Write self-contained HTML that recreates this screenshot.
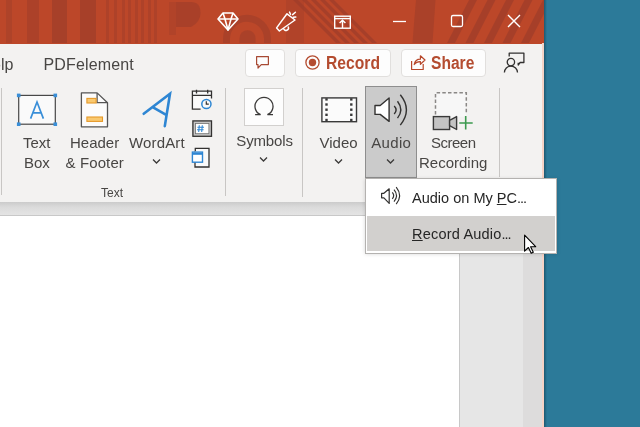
<!DOCTYPE html>
<html><head><meta charset="utf-8">
<style>
html,body{margin:0;padding:0;}
body{width:640px;height:427px;overflow:hidden;position:relative;background:#2C7A99;font-family:"Liberation Sans",sans-serif;}
.a{position:absolute;}
.win{left:0;top:0;width:544px;height:427px;background:#F3F2F1;overflow:hidden;}
.title{left:0;top:0;width:544px;height:43.5px;background:#BC4729;}
.lbl{position:absolute;font-size:15px;color:#484644;white-space:nowrap;line-height:20px;}
.sep{position:absolute;width:1px;background:#C8C6C4;}
.btn{position:absolute;top:48.5px;height:28.5px;background:#FDFDFD;border:1px solid #E1DFDD;border-radius:4px;box-sizing:border-box;}
.chev{position:absolute;}
.bt{font-size:17.5px;font-weight:bold;color:#B44C30;transform-origin:0 0;}
</style></head><body><div style="position:absolute;left:0;top:0;width:640px;height:427px;will-change:transform;">
<div class="a win">
  <!-- title bar -->
  <div class="a title">
    <svg class="a" style="left:0;top:0" width="544" height="43">
      <g fill="#9E3D2A">
        <rect x="6" y="0" width="6" height="43" opacity="0.45"/>
        <rect x="27" y="0" width="12" height="43" opacity="0.55"/>
        <rect x="52" y="0" width="15" height="43" opacity="0.7"/>
        <rect x="80" y="0" width="16" height="43" opacity="0.7"/>
        <g opacity="0.45">
        <rect x="106" y="0" width="3" height="43"/>
        <rect x="114" y="0" width="3" height="43"/>
        <rect x="122" y="0" width="3" height="43"/>
        <rect x="128" y="0" width="3" height="43"/>
        <rect x="135" y="0" width="3" height="43"/>
        <rect x="141" y="0" width="3" height="43"/>
        <rect x="148" y="0" width="3" height="43"/>
        <rect x="154" y="0" width="3" height="43"/>
        </g>
        <rect x="169" y="2" width="7" height="33" opacity="0.35"/>
        <path d="M176 2 H191 Q200.5 2 200.5 13 Q200.5 22 191 27 H176 Z" opacity="0.65"/>
        <path d="M226.5 43 V38.8 A20.5 20.5 0 0 1 267.5 38.8 V43" fill="none" stroke="#9E3D2A" stroke-width="7" opacity="0.6"/>
        <path d="M239.5 43 V38.2 A8 8 0 0 1 255.5 38.2 V43 Z" opacity="0.6"/>
        <rect x="286" y="0" width="18" height="43" opacity="0.35"/>
        <g opacity="0.7">
        <path d="M293 0 H298 L342 44 H337 Z"/>
        <path d="M302 0 H307 L351 44 H346 Z"/>
        <path d="M311 0 H316 L360 44 H355 Z"/>
        <path d="M320 0 H325 L369 44 H364 Z"/>
        <path d="M329 0 H334 L378 44 H373 Z"/>
        </g>
        <path d="M416 0 H435.5 Q434 22 432.5 43 H412.5 Q414 22 416 0 Z" opacity="0.6"/>
        <g opacity="0.7">
        <path d="M447 43 H455 L477 0 H469 Z"/>
        <path d="M465.5 43 H473.5 L495.5 0 H487.5 Z"/>
        <path d="M484 43 H492 L514 0 H506 Z"/>
        <path d="M502.5 43 H510.5 L532.5 0 H524.5 Z"/>
        <path d="M521 43 H529 L551 0 H543 Z"/>
        </g>
      </g>
      <!-- diamond -->
      <g fill="none" stroke="#fff" stroke-width="1.6" stroke-linejoin="round">
        <path d="M223 13 H233 L238 19 L228 30 L218 19 Z"/>
        <path d="M218 19 H238 M223 13 L225 19 L228 30 L231 19 L233 13"/>
      </g>
      <!-- megaphone -->
      <g fill="none" stroke="#fff" stroke-width="1.5" stroke-linejoin="round" stroke-linecap="round">
        <path d="M276.6 27.9 L287 13.8 L295 20 L279.4 31 Z"/>
        <path d="M283.6 28.8 A2.5 2.5 0 0 0 288.3 27"/>
        <path d="M289.5 12.1 L290.5 14.2 M292.6 14.6 L295.4 12.2 M293.3 17.3 L295.8 17"/>
      </g>
      <!-- ribbon display -->
      <g fill="none" stroke="#fff" stroke-width="1.4">
        <rect x="334.7" y="16.2" width="15.6" height="12"/>
        <path d="M334.7 18.6 H350.3"/>
        <path d="M342.5 28 V20.2 M339.6 23.1 L342.5 20.2 L345.4 23.1"/>
      </g>
      <!-- minimize -->
      <path d="M393 21.5 H406" stroke="#fff" stroke-width="1.3"/>
      <!-- maximize -->
      <rect x="451.5" y="15.5" width="11" height="11" rx="1.5" fill="none" stroke="#fff" stroke-width="1.3"/>
      <!-- close -->
      <path d="M508 15 L520 27 M520 15 L508 27" stroke="#fff" stroke-width="1.4"/>
    </svg>
  </div>

  <!-- tabs row -->
  <div class="lbl" style="left:-19.5px;top:55px;font-size:16px;">Help</div>
  <div class="lbl" style="left:43.5px;top:55px;font-size:16px;letter-spacing:0.15px;">PDFelement</div>

  <div class="btn" style="left:245px;width:40px;"></div>
  <svg class="a" style="left:245px;top:48px" width="40" height="29">
    <path d="M11.6 8.6 H23.4 V16.6 H16.3 L13 20 V16.6 H11.6 Z" fill="none" stroke="#A84A34" stroke-width="1.2" stroke-linejoin="round"/>
  </svg>

  <div class="btn" style="left:295px;width:96px;"></div>
  <svg class="a" style="left:295px;top:48px" width="30" height="29">
    <circle cx="17.5" cy="14.5" r="6.6" fill="none" stroke="#B44C30" stroke-width="1.3"/>
    <circle cx="17.5" cy="14.5" r="3.7" fill="#B44C30"/>
  </svg>
  <div class="lbl bt" style="left:325.5px;top:52.6px;transform:scaleX(0.895);">Record</div>

  <div class="btn" style="left:401px;width:85px;"></div>
  <svg class="a" style="left:401px;top:48px" width="30" height="29">
    <g fill="none" stroke="#B7472A" stroke-width="1.2" stroke-linejoin="round">
      <path d="M10.6 13 V21.5 H22.2 V16"/>
      <path d="M13.2 16.5 Q14.2 11.2 19.4 11.2 V7.8 L24 12 L19.4 16.3 V13.6 Q15.5 13.4 13.2 16.5 Z"/>
    </g>
  </svg>
  <div class="lbl bt" style="left:431px;top:52.6px;transform:scaleX(0.89);">Share</div>

  <svg class="a" style="left:498px;top:46px" width="32" height="32">
    <g fill="none" stroke="#323130" stroke-width="1.3" stroke-linejoin="round">
      <path d="M11.2 10.5 V7.1 H25.9 V16.5 H22.1 L20.2 19.1 V16.8"/>
      <circle cx="12.9" cy="16.1" r="3.7"/>
      <path d="M6.4 26.6 A6.55 6.55 0 0 1 19.5 26.6"/>
    </g>
  </svg>

  <!-- ribbon body -->
  <div class="sep" style="left:1px;top:88px;height:107px;"></div>

  <!-- Text Box -->
  <svg class="a" style="left:14px;top:92px" width="48" height="36">
    <rect x="4.7" y="3.4" width="36.6" height="28.8" fill="#FAFAFA" stroke="#484848" stroke-width="1.2"/>
    <g fill="#3A8FD8">
      <rect x="2.9" y="1.6" width="3.6" height="3.6"/><rect x="39.5" y="1.6" width="3.6" height="3.6"/>
      <rect x="2.9" y="30.4" width="3.6" height="3.6"/><rect x="39.5" y="30.4" width="3.6" height="3.6"/>
    </g>
    <path d="M16.6 26.6 L23 10 L29.4 26.6 M18.8 20.9 H27.2" fill="none" stroke="#3A8FD8" stroke-width="1.7"/>
  </svg>
  <div class="lbl" style="left:23px;top:132.9px;">Text</div>
  <div class="lbl" style="left:24px;top:152.9px;">Box</div>

  <!-- Header & Footer -->
  <svg class="a" style="left:78px;top:90px" width="34" height="40">
    <path d="M3.4 2.9 H19.1 L29.5 12.7 V36.8 H3.4 Z" fill="#FCFCFC" stroke="#555555" stroke-width="1.3" stroke-linejoin="round"/>
    <path d="M19.1 2.9 V12.7 H29.5" fill="none" stroke="#555555" stroke-width="1.3"/>
    <rect x="8.9" y="8.4" width="9.2" height="4.6" fill="#F9C970" stroke="#E69A2A" stroke-width="1.1"/>
    <rect x="8.9" y="27" width="15.6" height="4.4" fill="#F9C970" stroke="#E69A2A" stroke-width="1.1"/>
  </svg>
  <div class="lbl" style="left:70px;top:132.9px;">Header</div>
  <div class="lbl" style="left:65.5px;top:152.9px;letter-spacing:0.12px;">&amp; Footer</div>

  <!-- WordArt -->
  <svg class="a" style="left:138px;top:88px" width="40" height="44">
    <g fill="none" stroke="#2E86D3" stroke-width="2.6" stroke-linecap="round">
      <path d="M5.7 25.8 L32 5.7 L26.8 38.1"/>
      <path d="M15.5 19.6 L27.3 26.3"/>
    </g>
  </svg>
  <div class="lbl" style="left:129px;top:132.9px;letter-spacing:0.15px;">WordArt</div>
  <svg class="chev" style="left:152px;top:158px" width="9" height="7"><path d="M1 1.5 L4.5 5 L8 1.5" fill="none" stroke="#3B3A39" stroke-width="1.3"/></svg>

  <!-- small icons -->
  <svg class="a" style="left:186px;top:86px" width="30" height="86">
    <g fill="none" stroke="#323130" stroke-width="1.3">
      <path d="M14.6 23.2 H6.4 V5.2 H25.5 V12.4" fill="#FAFAFA"/>
      <path d="M6.4 9.4 H25.5 M10.5 3.8 V7.5 M21.7 3.8 V7.5"/>
    </g>
    <circle cx="20.4" cy="18" r="4.6" fill="#FAFAFA" stroke="#2E86D3" stroke-width="1.5"/>
    <path d="M20.3 15.3 V18.1 H22.8" fill="none" stroke="#323130" stroke-width="1.2"/>
    <rect x="6.9" y="34.9" width="18.6" height="15.4" fill="#C4C4C4" stroke="#323130" stroke-width="1.3"/>
    <rect x="9.5" y="37.5" width="13.4" height="10.2" fill="#FFFFFF" stroke="#707070" stroke-width="0.8"/>
    <path d="M13.3 39.2 L12.7 46 M16.3 39.2 L15.7 46 M11.4 41.3 H18 M11 43.8 H17.6" stroke="#2E86D3" stroke-width="1.1"/>
    <path d="M9 65.5 V81 H23 V62.4 H9.3 V65" fill="#FAFAFA" stroke="#323130" stroke-width="1.3"/>
    <rect x="6.4" y="66.1" width="10.1" height="10.1" fill="#FFFFFF" stroke="#2E86D3" stroke-width="1.4"/>
    <path d="M6.4 67.8 H16.5" stroke="#2E86D3" stroke-width="2"/>
  </svg>

  <div class="lbl" style="left:101px;top:183px;font-size:12px;">Text</div>
  <div class="sep" style="left:225px;top:88px;height:108px;"></div>

  <!-- Symbols -->
  <div class="a" style="left:244px;top:88px;width:40px;height:38px;background:#FDFDFD;border:1px solid #D2D0CE;box-sizing:border-box;"></div>
  <svg class="a" style="left:244px;top:88px" width="40" height="38">
    <path d="M11.1 26.7 H16.6 A9 9 0 1 1 23.4 26.7 H29" fill="none" stroke="#3B3A39" stroke-width="1.3"/>
  </svg>
  <div class="lbl" style="left:236.3px;top:130.6px;letter-spacing:-0.15px;">Symbols</div>
  <svg class="chev" style="left:259px;top:156px" width="9" height="7"><path d="M1 1.5 L4.5 5 L8 1.5" fill="none" stroke="#3B3A39" stroke-width="1.3"/></svg>

  <div class="sep" style="left:302px;top:88px;height:109px;"></div>

  <!-- Video -->
  <svg class="a" style="left:316px;top:90px" width="46" height="40">
    <rect x="5.9" y="7.9" width="34.6" height="23.8" fill="#FBFBFB" stroke="#3A3A3A" stroke-width="1.4"/>
    <g fill="#3A3A3A">
      <rect x="9.3" y="8.2" width="2.4" height="2.4"/><rect x="9.3" y="13.3" width="2.4" height="2.4"/><rect x="9.3" y="18.5" width="2.4" height="2.4"/><rect x="9.3" y="23.6" width="2.4" height="2.4"/><rect x="9.3" y="28.8" width="2.4" height="2.4"/>
      <rect x="34.1" y="8.2" width="2.4" height="2.4"/><rect x="34.1" y="13.3" width="2.4" height="2.4"/><rect x="34.1" y="18.5" width="2.4" height="2.4"/><rect x="34.1" y="23.6" width="2.4" height="2.4"/><rect x="34.1" y="28.8" width="2.4" height="2.4"/>
    </g>
  </svg>
  <div class="lbl" style="left:319.5px;top:132.9px;">Video</div>
  <svg class="chev" style="left:334px;top:158px" width="9" height="7"><path d="M1 1.5 L4.5 5 L8 1.5" fill="none" stroke="#3B3A39" stroke-width="1.3"/></svg>

  <!-- Audio (pressed) -->
  <div class="a" style="left:365px;top:86px;width:52px;height:92px;background:#CBCBCB;border:1px solid #8E8E8E;box-sizing:border-box;"></div>
  <svg class="a" style="left:368px;top:90px" width="46" height="40">
    <path d="M7 15.5 H12.2 L21.1 8 V31.4 L12.2 24.4 H7 Z" fill="#fff" stroke="#323130" stroke-width="1.4" stroke-linejoin="round"/>
    <g fill="none" stroke="#323130" stroke-width="1.4">
      <path d="M26.2 15.9 Q30 19.8 26.2 23.9"/>
      <path d="M29.5 11.2 Q36.1 19.7 29.5 28.1"/>
      <path d="M32.3 4.7 Q44.5 19.7 32.3 35.1"/>
    </g>
  </svg>
  <div class="lbl" style="left:371.3px;top:132.9px;letter-spacing:0.3px;">Audio</div>
  <svg class="chev" style="left:386px;top:158px" width="9" height="7"><path d="M1 1.5 L4.5 5 L8 1.5" fill="none" stroke="#3B3A39" stroke-width="1.3"/></svg>

  <!-- Screen Recording -->
  <svg class="a" style="left:428px;top:88px" width="50" height="46">
    <rect x="7.5" y="4.8" width="30.8" height="24" fill="#F7F7F7" stroke="none"/>
    <path d="M7.5 26.5 V4.8 H38.3 V26.5" fill="none" stroke="#8A8886" stroke-width="1.5" stroke-dasharray="3.5 2.2"/>
    <rect x="5.4" y="28.6" width="16.2" height="12.9" fill="#C4C4C4" stroke="#3A3A3A" stroke-width="1.4"/>
    <path d="M21.6 32.3 L28.6 28.6 V41.5 L21.6 37.7 Z" fill="#C4C4C4" stroke="#3A3A3A" stroke-width="1.4" stroke-linejoin="round"/>
    <path d="M31.3 35 H44.7 M37.7 28 V41.5" stroke="#3C9A4F" stroke-width="1.6"/>
  </svg>
  <div class="lbl" style="left:431px;top:132.9px;letter-spacing:-0.5px;">Screen</div>
  <div class="lbl" style="left:419px;top:152.9px;">Recording</div>
  <div class="sep" style="left:499px;top:88px;height:89px;"></div>

  <!-- shadow band under ribbon -->
  <div class="a" style="left:0;top:201.5px;width:544px;height:13.5px;background:linear-gradient(#CBCBCB,#DBDBDB 40%,#E4E4E4);border-bottom:1px solid #C8C8C8;"></div>

  <!-- slide area -->
  <div class="a" style="left:0;top:216px;width:459px;height:211px;background:#FFFFFF;"></div>
  <div class="a" style="left:459px;top:216px;width:1px;height:211px;background:#C8C8C8;"></div>
  <div class="a" style="left:460px;top:216px;width:63px;height:211px;background:#E6E6E6;"></div>
  <div class="a" style="left:523px;top:216px;width:20px;height:211px;background:#DDDCDC;"></div>
  <div class="a" style="left:542px;top:43px;width:1.5px;height:384px;background:#F6D3C6;"></div>
</div>

<div class="a" style="left:544px;top:0;width:3px;height:427px;background:linear-gradient(to right,#1F5870,#2C7A99);"></div>
<!-- popup menu -->
<div class="a" style="left:365px;top:178px;width:192px;height:75px;box-shadow:0 1px 4px rgba(0,0,0,0.16);"></div>
<div class="a" style="left:365px;top:178px;width:192px;height:75.5px;background:#FFFFFF;border:1px solid #B4B2B0;box-sizing:border-box;"></div>
<div class="a" style="left:367px;top:215.7px;width:188px;height:35.8px;background:#D2D0CE;"></div>
<svg class="a" style="left:378px;top:186px" width="26" height="22">
  <path d="M3.6 7.3 H5.9 L11.2 2.8 V17.4 L5.9 11.8 H3.6 Z" fill="#fff" stroke="#323130" stroke-width="1.2" stroke-linejoin="round"/>
  <g fill="none" stroke="#323130" stroke-width="1.15">
  <path d="M14.3 6.4 Q17.1 9.5 14.3 12.9"/>
  <path d="M16 3.6 Q21 9.5 16 15.7"/>
  <path d="M18.2 1.1 Q25 9.5 18.2 18.2"/>
  </g>
</svg>
<div class="lbl" style="left:412px;top:187.8px;font-size:15.3px;color:#262626;transform:scaleX(0.95);transform-origin:0 0;">Audio on My <u>P</u>C<span style="letter-spacing:-1.1px">...</span></div>
<div class="lbl" style="left:412px;top:223.6px;font-size:15.3px;color:#262626;letter-spacing:0.2px;transform:scaleX(0.95);transform-origin:0 0;"><u>R</u>ecord Audio<span style="letter-spacing:-1.1px">...</span></div>

<!-- cursor -->
<svg class="a" style="left:523px;top:234px" width="16" height="22">
  <path d="M1.6 1.2 V17.2 L5.4 13.5 L8.2 19.3 L10.3 18.3 L7.6 12.7 H12.7 Z" fill="#fff" stroke="#000" stroke-width="1.1" stroke-linejoin="round"/>
</svg>
</div></body></html>
